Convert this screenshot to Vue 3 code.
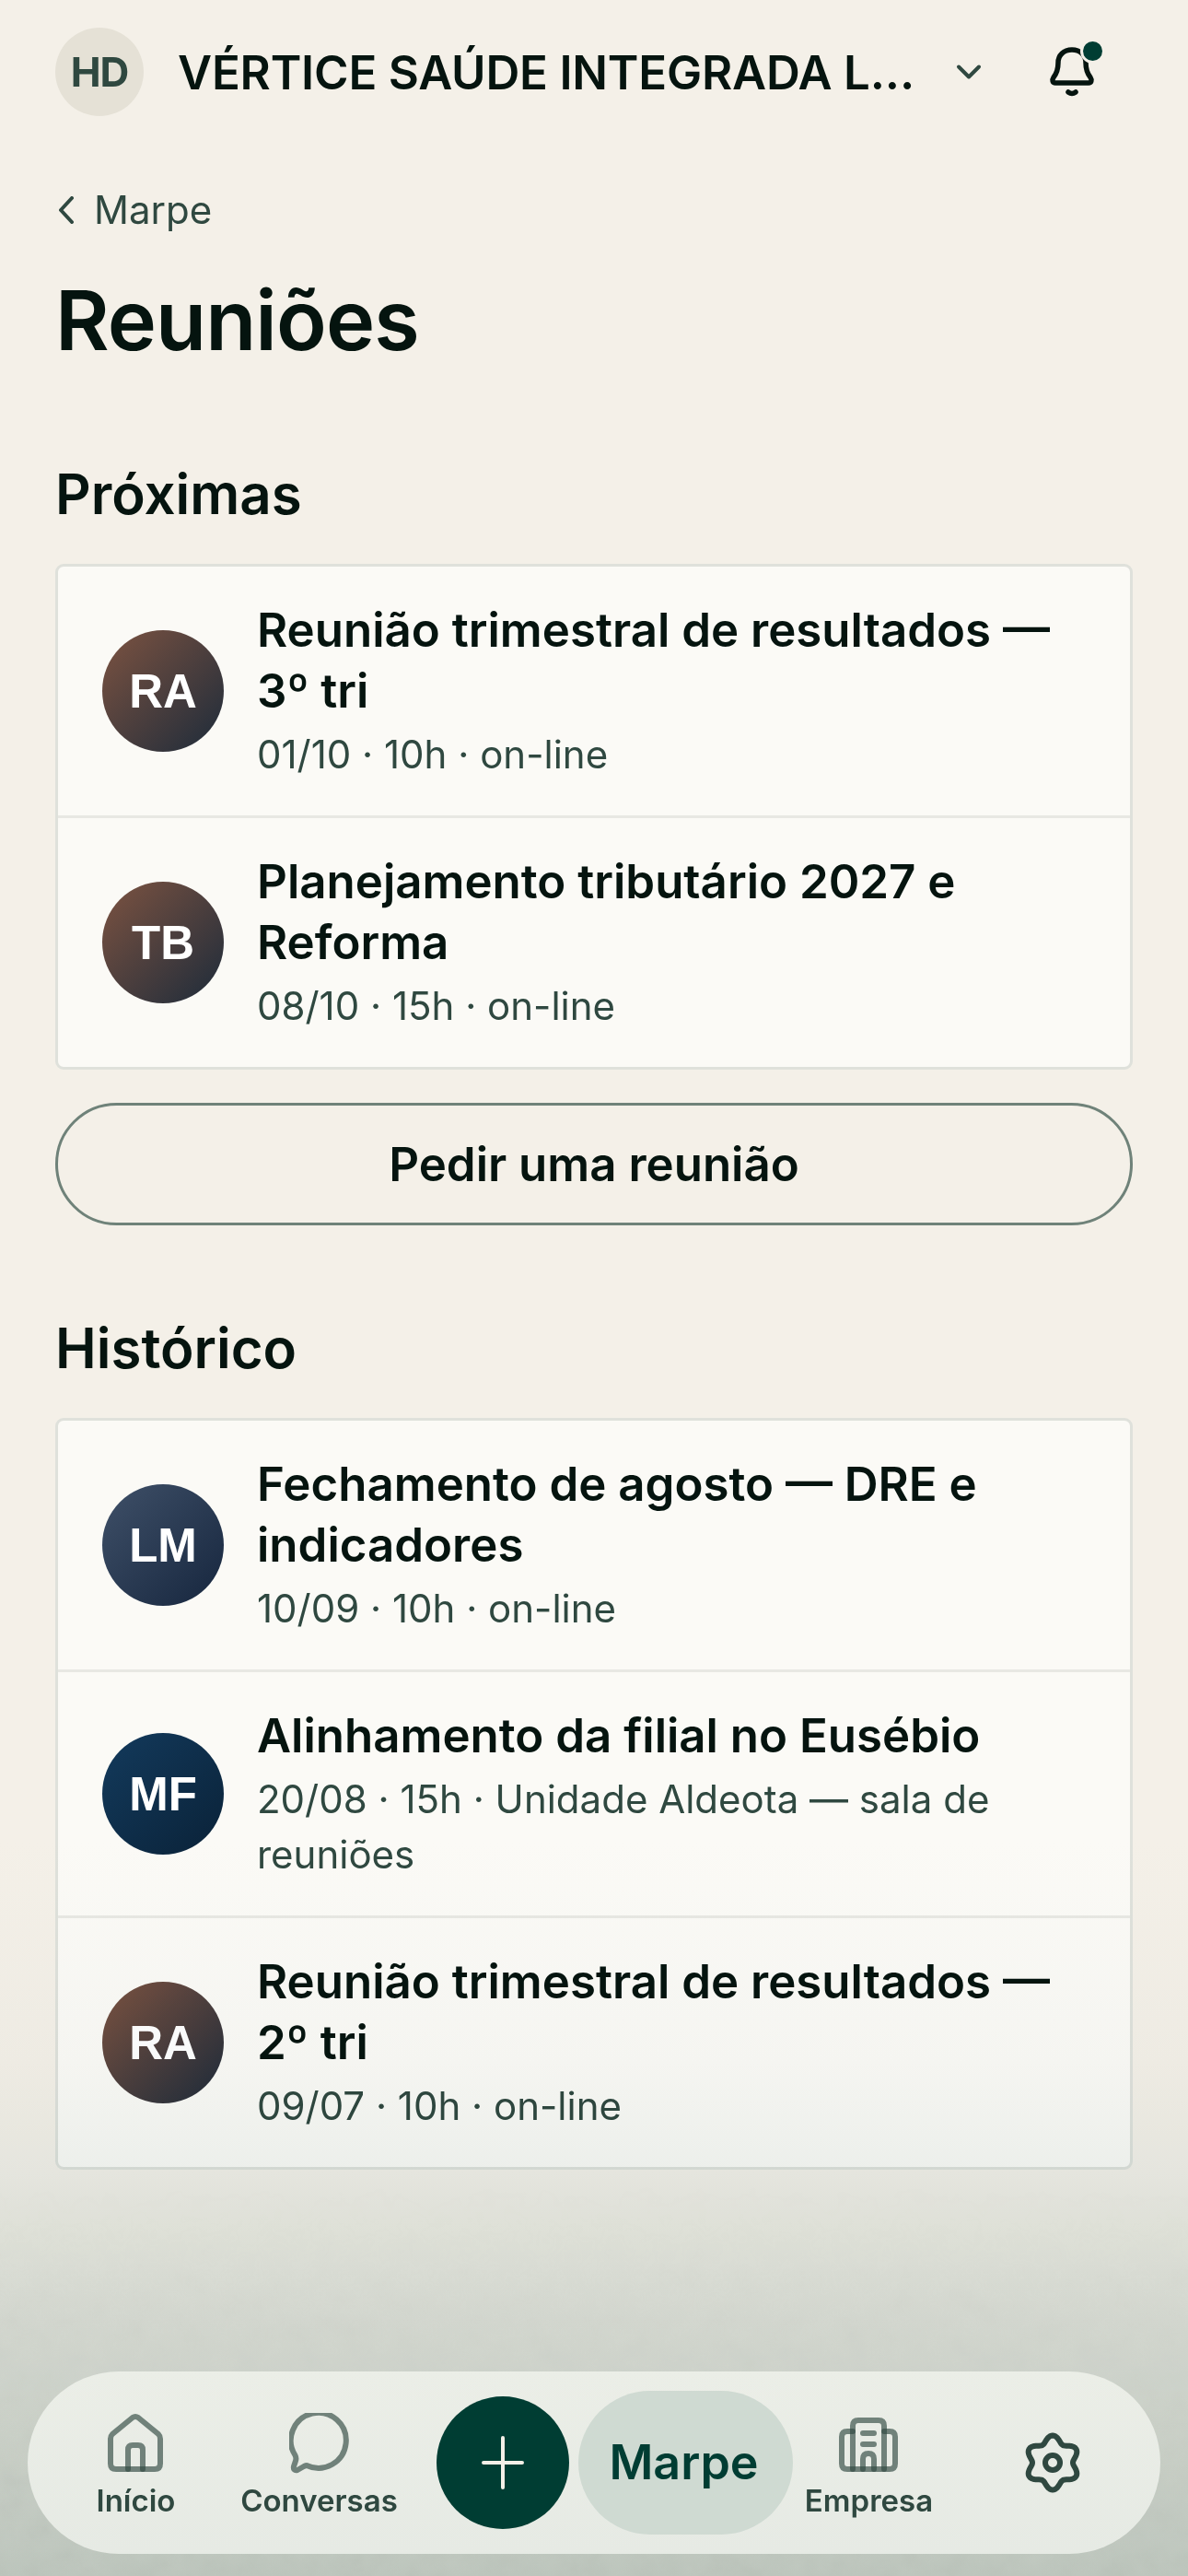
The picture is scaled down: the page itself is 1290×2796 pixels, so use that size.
<template>
  <div class="page">
    <header class="topbar">
      <div class="avatar-hd">HD</div>
      <div class="company">VÉRTICE SAÚDE INTEGRADA L...</div>
      <svg class="chevron" viewBox="0 0 30 30" fill="none">
        <path d="M4 9.5 L15 20.5 L26 9.5" />
      </svg>
      <div class="bell">
        <svg viewBox="0 0 60 60" fill="none">
          <path d="M10 36 C14 31 15 27 15 20 C15 12 21 6 30 6 C39 6 45 12 45 20 C45 27 46 31 50 36 C52 39 51 42 48 42 H12 C9 42 8 39 10 36 Z" />
          <path d="M26 52 Q30 55 34 52" />
        </svg>
        <span class="dot"></span>
      </div>
    </header>

    <main class="content">
      <div class="back">
        <svg viewBox="0 0 18 30" fill="none"><path d="M14 2 L2 15 L14 28" /></svg>
        <span>Marpe</span>
      </div>
      <h1>Reuniões</h1>

      <h2>Próximas</h2>
      <div class="card">
        <div v-for="m in upcoming" :key="m.title" class="row">
          <div class="avatar" :class="m.color">{{ m.initials }}</div>
          <div class="info">
            <div class="title">{{ m.title }}</div>
            <div class="meta">{{ m.meta }}</div>
          </div>
        </div>
      </div>
      <button class="request">Pedir uma reunião</button>

      <h2 class="history">Histórico</h2>
      <div class="card">
        <div v-for="m in past" :key="m.title" class="row">
          <div class="avatar" :class="m.color">{{ m.initials }}</div>
          <div class="info">
            <div class="title">{{ m.title }}</div>
            <div class="meta">{{ m.meta }}</div>
          </div>
        </div>
      </div>
    </main>

    <div class="scrim">
      <svg class="grain" width="1290" height="796">
        <filter id="grain-noise">
          <feTurbulence type="fractalNoise" baseFrequency="0.035" numOctaves="4" seed="4" />
          <feColorMatrix type="saturate" values="0" />
        </filter>
        <rect width="1290" height="796" filter="url(#grain-noise)" />
      </svg>
    </div>

    <nav class="tabbar">
      <div class="tab">
        <svg class="ico faded" viewBox="0 0 66 66" fill="none">
          <path d="M6 28 Q6 25 8 23 L30 5 Q33 3 36 5 L58 23 Q60 25 60 28 V55 Q60 61 54 61 H12 Q6 61 6 55 Z" />
          <path d="M25 61 V40 Q25 35 30 35 H36 Q41 35 41 40 V61" />
        </svg>
        <span>Início</span>
      </div>
      <div class="tab">
        <svg class="ico faded" viewBox="0 0 66 66" fill="none">
          <path d="M19 57 A30 30 0 1 0 6.5 46 Q8 49 7 52 L5 58 Q4 63 9 62 L16 58 Q18 57 19 57 Z" />
        </svg>
        <span>Conversas</span>
      </div>
      <div class="tab">
        <div class="plus">
          <svg viewBox="0 0 48 60" fill="none"><path d="M24 3 V57 M3 30 H45" /></svg>
        </div>
      </div>
      <div class="tab">
        <div class="marpe">Marpe</div>
      </div>
      <div class="tab">
        <svg class="ico faded" viewBox="0 0 66 66" fill="none">
          <path d="M16 20 H10 Q4 20 4 26 V55 Q4 61 10 61 H56 Q62 61 62 55 V26 Q62 20 56 20 H50" />
          <path d="M16 61 V14 Q16 8 22 8 H44 Q50 8 50 14 V61" />
          <path d="M27 22 H39 M27 34 H39" />
          <path d="M27 61 V50 Q27 44 33 44 Q39 44 39 50 V61" />
        </svg>
        <span>Empresa</span>
      </div>
      <div class="tab">
        <svg class="ico gear" viewBox="0 0 66 66" fill="none">
          <path :d="gearPath" />
          <circle cx="33" cy="33" r="8" />
        </svg>
      </div>
    </nav>
  </div>
</template>

<script setup>
const upcoming = [
  { initials: 'RA', color: 'brown', title: 'Reunião trimestral de resultados — 3º tri', meta: '01/10 · 10h · on-line' },
  { initials: 'TB', color: 'brown', title: 'Planejamento tributário 2027 e Reforma', meta: '08/10 · 15h · on-line' }
]

const past = [
  { initials: 'LM', color: 'slate', title: 'Fechamento de agosto — DRE e indicadores', meta: '10/09 · 10h · on-line' },
  { initials: 'MF', color: 'navy', title: 'Alinhamento da filial no Eusébio', meta: '20/08 · 15h · Unidade Aldeota — sala de reuniões' },
  { initials: 'RA', color: 'brown', title: 'Reunião trimestral de resultados — 2º tri', meta: '09/07 · 10h · on-line' }
]

// six soft lobes, one pointing straight up
const gearPath = Array.from({ length: 120 }, (_, i) => {
  const a = (i / 120) * Math.PI * 2
  const r = 25.75 + 3.75 * Math.cos(6 * a)
  const x = 33 + r * Math.sin(a)
  const y = 33 - r * Math.cos(a)
  return (i ? 'L' : 'M') + x.toFixed(2) + ' ' + y.toFixed(2)
}).join(' ') + ' Z'
</script>

<style>
html, body {
  margin: 0;
  background: #f4f0e8;
}
</style>

<style scoped>
.page {
  position: relative;
  width: 1290px;
  height: 2796px;
  overflow: hidden;
  background: #f4f0e8;
  font-family: Inter, "Noto Sans", sans-serif;
  color: #05140f;
}

.topbar {
  display: flex;
  align-items: center;
  height: 96px;
  padding: 30px 60px 0;
}

.avatar-hd {
  flex: none;
  width: 96px;
  height: 96px;
  border-radius: 50%;
  background: #e5e1d6;
  color: #2f4840;
  font-size: 44px;
  font-weight: 700;
  letter-spacing: -1px;
  display: flex;
  align-items: center;
  justify-content: center;
}

.company {
  width: 800px;
  margin-left: 37px;
  font-size: 51px;
  font-weight: 600;
  letter-spacing: -0.2px;
  white-space: nowrap;
}

.chevron {
  width: 30px;
  height: 30px;
  margin-left: 44px;
  flex: none;
}
.chevron path {
  stroke: #2f4840;
  stroke-width: 4;
  stroke-linecap: round;
  stroke-linejoin: round;
}

.bell {
  position: relative;
  width: 60px;
  height: 60px;
  margin-left: 67px;
  flex: none;
}
.bell svg {
  width: 60px;
  height: 60px;
}
.bell path {
  stroke: #05140f;
  stroke-width: 5.5;
  stroke-linecap: round;
  stroke-linejoin: round;
}
.dot {
  position: absolute;
  top: -3px;
  left: 42px;
  width: 21px;
  height: 21px;
  border-radius: 50%;
  background: #003d33;
  box-shadow: 0 0 0 3px #f4f0e8;
}

.content {
  padding: 72px 60px 0;
}

.back {
  display: flex;
  align-items: center;
  gap: 20px;
  color: #2f4840;
  font-size: 42px;
  line-height: 60px;
}
.back svg {
  width: 18px;
  height: 30px;
  margin-left: 4px;
}
.back path {
  stroke: #2f4840;
  stroke-width: 4;
  stroke-linecap: round;
  stroke-linejoin: round;
}

h1 {
  margin: 35px 0 0;
  font-size: 90px;
  font-weight: 600;
  letter-spacing: -0.9px;
  line-height: 110px;
}

h2 {
  margin: 93px 0 0;
  font-size: 60px;
  font-weight: 600;
  line-height: 80px;
}
h2.history {
  margin-top: 93px;
}

.card {
  margin-top: 36px;
  border: 3px solid #dfe1db;
  border-radius: 9px;
  background: #fbfaf6;
}

.row {
  display: flex;
  align-items: center;
  gap: 36px;
  padding: 36px 48px;
}
.row + .row {
  border-top: 3px solid #e8e8e3;
}

.avatar {
  flex: none;
  width: 132px;
  height: 132px;
  border-radius: 50%;
  color: #fff;
  font-family: "Liberation Sans", Arial, sans-serif;
  font-weight: 700;
  font-size: 51px;
  display: flex;
  align-items: center;
  justify-content: center;
}
.avatar.brown {
  background: linear-gradient(135deg, #7d5341, #1d2b3a);
}
.avatar.slate {
  background: linear-gradient(135deg, #3f5068, #16263e);
}
.avatar.navy {
  background: linear-gradient(135deg, #133a5c, #0a2238);
}

.info {
  flex: 1;
  min-width: 0;
}

.title {
  font-size: 51px;
  font-weight: 600;
  line-height: 66px;
}

.meta {
  margin-top: 6px;
  color: #2f4840;
  font-size: 42px;
  line-height: 60px;
}

.request {
  display: block;
  box-sizing: border-box;
  width: 100%;
  height: 133px;
  margin-top: 36px;
  border: 3px solid #6f8279;
  border-radius: 67px;
  background: transparent;
  color: #05140f;
  font-family: inherit;
  font-size: 51px;
  font-weight: 600;
}

/* multiply keeps the dark avatars dark while the page turns sage */
.scrim {
  position: absolute;
  left: 0;
  right: 0;
  bottom: 0;
  height: 796px;
  background: linear-gradient(#fff, #f9fafa 30%, #f0f4f4 45%, #e9efee 52%, #dde5e4 65%, #c6d3d0);
  mix-blend-mode: multiply;
  pointer-events: none;
}

.grain {
  position: absolute;
  left: 0;
  top: 0;
  opacity: 0.09;
  -webkit-mask-image: linear-gradient(transparent 45%, #000 85%);
  mask-image: linear-gradient(transparent 45%, #000 85%);
}

.tabbar {
  position: absolute;
  left: 30px;
  right: 30px;
  bottom: 24px;
  height: 198px;
  box-sizing: border-box;
  padding: 0 18px;
  border-radius: 99px;
  background: linear-gradient(#ebeee7, #e6eae4);
  display: grid;
  grid-template-columns: repeat(6, minmax(0, 1fr));
  align-items: center;
  justify-items: center;
}

.tab {
  display: flex;
  flex-direction: column;
  align-items: center;
  color: #2f4840;
  font-size: 33px;
  font-weight: 600;
  line-height: 28px;
  white-space: nowrap;
}

.ico {
  width: 66px;
  height: 66px;
  margin-bottom: 15px;
}
.ico path,
.ico circle {
  stroke-width: 6;
  stroke-linecap: round;
  stroke-linejoin: round;
}
.faded path {
  stroke: rgba(47, 72, 64, 0.65);
}
.gear {
  margin-bottom: 0;
}
.gear path,
.gear circle {
  stroke: #2f4840;
}

.plus {
  width: 144px;
  height: 144px;
  border-radius: 50%;
  background: #003d33;
  display: flex;
  align-items: center;
  justify-content: center;
}
.plus svg {
  width: 48px;
  height: 60px;
}
.plus path {
  stroke: #f4f0e8;
  stroke-width: 4;
  stroke-linecap: round;
}

.marpe {
  box-sizing: border-box;
  width: 233px;
  height: 156px;
  padding-right: 4px;
  border-radius: 78px;
  background: #cfdad2;
  color: #003d33;
  font-size: 52px;
  font-weight: 600;
  display: flex;
  align-items: center;
  justify-content: center;
}
</style>
